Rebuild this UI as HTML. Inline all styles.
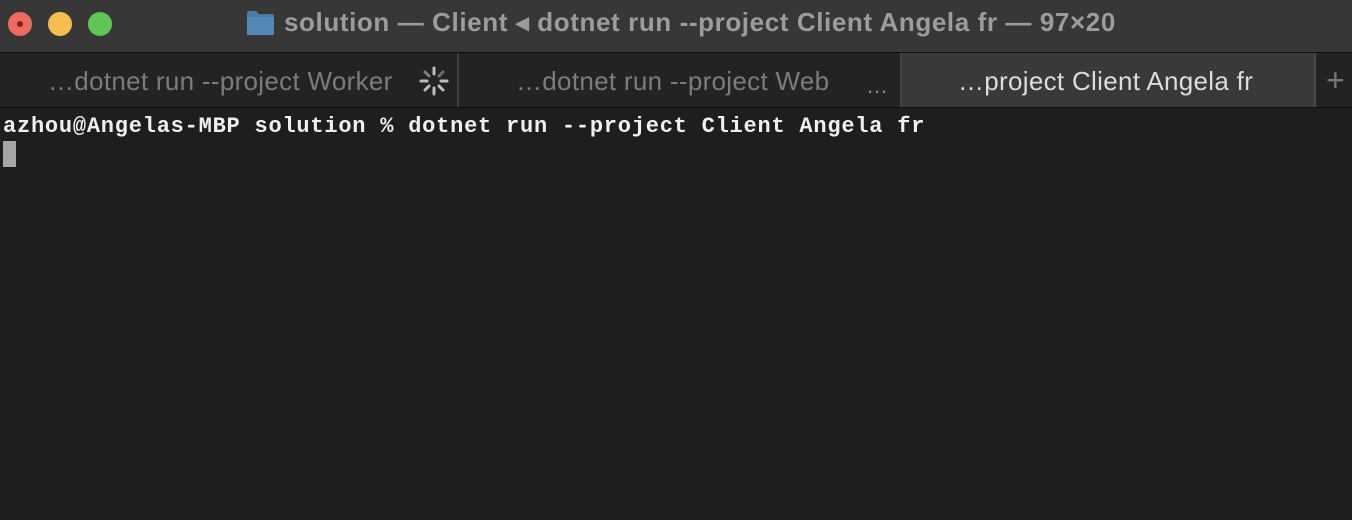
<!DOCTYPE html>
<html><head><style>
body{margin:0;width:1352px;height:520px;background:#1e1e1e;overflow:hidden;position:relative;font-family:"Liberation Sans",sans-serif}
.title{position:absolute;left:0;top:0;width:1352px;height:52px;background:#373737;border-bottom:1px solid #101010}
.dot{position:absolute;top:12px;width:24px;height:24px;border-radius:50%}
.ttl{position:absolute;left:284px;top:7px;font-size:26px;font-weight:bold;color:#9c9c9c;white-space:nowrap;letter-spacing:0.6px}
.tabs{position:absolute;left:0;top:53px;width:1352px;height:54px;background:#232323;border-bottom:1px solid #0e0e0e}
.tab{position:absolute;top:1px;height:54px;font-size:26px;color:#7c7c7c;line-height:54px;white-space:nowrap;letter-spacing:0.3px}
.sep{position:absolute;top:0;width:2px;height:54px;background:#3e3e3e}
.term{position:absolute;left:3px;top:114px;font-family:"Liberation Mono",monospace;font-size:22px;letter-spacing:0.77px;color:#f0f0f0;white-space:pre;font-weight:bold}
</style></head><body>
<div class="title">
<div class="dot" style="left:8px;background:#ec6a5f"><div style="position:absolute;left:9px;top:9px;width:6px;height:6px;border-radius:50%;background:#8c1a10"></div></div>
<div class="dot" style="left:48px;background:#f4bf4f"></div>
<div class="dot" style="left:88px;background:#61c554"></div>
<svg style="position:absolute;left:246px;top:10px" width="29" height="26"><path d="M1 3 Q1 1 3 1 H10 L13 4 H26 Q28 4 28 6 V23 Q28 25 26 25 H3 Q1 25 1 23Z" fill="#4a7ba4"/><rect x="1" y="7" width="27" height="18" rx="1" fill="#5588b4"/></svg>
<div class="ttl">solution — Client ◂ dotnet run --project Client Angela fr — 97×20</div>
</div>
<div class="tabs">
<div class="tab" style="left:48px">…dotnet run --project Worker</div>
<svg style="position:absolute;left:418px;top:12px" width="32" height="32" viewBox="-16 -16 32 32" stroke="#bdbdbd" stroke-width="3" stroke-linecap="round">
<line x1="0" y1="-7" x2="0" y2="-13"/><line x1="5" y1="-5" x2="9" y2="-9" opacity=".5"/><line x1="7" y1="0" x2="13" y2="0"/><line x1="5" y1="5" x2="9" y2="9"/><line x1="0" y1="7" x2="0" y2="13"/><line x1="-5" y1="5" x2="-9" y2="9"/><line x1="-7" y1="0" x2="-13" y2="0"/><line x1="-5" y1="-5" x2="-9" y2="-9" opacity=".6"/></svg>
<div class="sep" style="left:457px"></div>
<div class="tab" style="left:516px">…dotnet run --project Web</div>
<div class="tab" style="left:866px;font-size:22px;color:#8a8a8a;top:6px">…</div>
<div style="position:absolute;left:900px;top:0;width:414px;height:54px;background:#393939;border-left:2px solid #444"></div>
<div class="tab" style="left:958px;color:#dcdcdc">…project Client Angela fr</div>
<div class="sep" style="left:1314px;background:#4a4a4a"></div>
<div class="tab" style="left:1326px;font-size:32px;color:#777;top:0">+</div>
</div>
<div class="term">azhou@Angelas-MBP solution % dotnet run --project Client Angela fr</div>
<div style="position:absolute;left:3px;top:141px;width:13px;height:26px;background:#a6a6a6"></div>
</body></html>
